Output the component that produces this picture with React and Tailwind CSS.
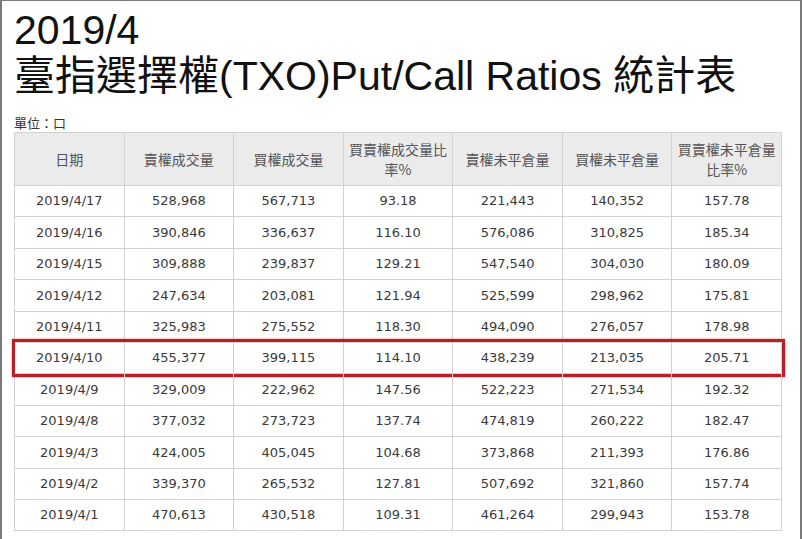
import React from 'react';

const headers = [
  ['日期'],
  ['賣權成交量'],
  ['買權成交量'],
  ['買賣權成交量比', '率%'],
  ['賣權未平倉量'],
  ['買權未平倉量'],
  ['買賣權未平倉量', '比率%'],
];

const rows = [
  ['2019/4/17', '528,968', '567,713', '93.18', '221,443', '140,352', '157.78'],
  ['2019/4/16', '390,846', '336,637', '116.10', '576,086', '310,825', '185.34'],
  ['2019/4/15', '309,888', '239,837', '129.21', '547,540', '304,030', '180.09'],
  ['2019/4/12', '247,634', '203,081', '121.94', '525,599', '298,962', '175.81'],
  ['2019/4/11', '325,983', '275,552', '118.30', '494,090', '276,057', '178.98'],
  ['2019/4/10', '455,377', '399,115', '114.10', '438,239', '213,035', '205.71'],
  ['2019/4/9', '329,009', '222,962', '147.56', '522,223', '271,534', '192.32'],
  ['2019/4/8', '377,032', '273,723', '137.74', '474,819', '260,222', '182.47'],
  ['2019/4/3', '424,005', '405,045', '104.68', '373,868', '211,393', '176.86'],
  ['2019/4/2', '339,370', '265,532', '127.81', '507,692', '321,860', '157.74'],
  ['2019/4/1', '470,613', '430,518', '109.31', '461,264', '299,943', '153.78'],
];

const App = () => {
  return (
    <div className="w-[802px] h-[539px] overflow-hidden bg-white border-t border-l-2 border-r-2 border-[#7a7a7a]">
      <div className="pl-[12px] pt-[6px] text-[#111] font-['Liberation_Sans','Noto_Sans_CJK_TC',sans-serif]">
        <div className="text-[41px] leading-[46px]">2019/4</div>
        <div className="text-[41px] leading-[46px] whitespace-nowrap">臺指選擇權(TXO)Put/Call Ratios 統計表</div>
      </div>

      <div className="pl-[12px] mt-[15px] text-[13px] leading-[18px] text-[#333] font-['Noto_Sans_CJK_TC',sans-serif]">單位：口</div>

      <div className="ml-[12px] w-[768px] border-t border-l border-[#d2d2d2]">
        {/* header */}
        <div className="grid grid-cols-7 h-[53px] bg-[#ebebeb] text-[14px] leading-[20px] text-[#555] font-['Noto_Sans_CJK_TC',sans-serif]">
          {headers.map((h, i) => (
            <div key={i} className="flex flex-col items-center justify-center border-r border-b border-[#d2d2d2] text-center">
              {h.map((line, j) => (
                <div key={j}>{line}</div>
              ))}
            </div>
          ))}
        </div>

        {rows.map((r, i) => (
          <div key={i} className="relative grid grid-cols-7 h-[31.4px] text-[13px] text-[#3a3a3a] font-['DejaVu_Sans','Verdana',sans-serif]">
            {r.map((c, j) => (
              <div key={j} className="flex items-center justify-center border-r border-b border-[#d2d2d2]">
                {c}
              </div>
            ))}
            {r[0] === '2019/4/10' && (
              <div className="absolute -left-[3px] -right-[3px] -top-[4px] -bottom-[3px] border-[3px] border-[#ba1f28] shadow-[0_0_2px_rgba(186,31,40,0.6)]"></div>
            )}
          </div>
        ))}
      </div>
    </div>
  );
};

export default App;
